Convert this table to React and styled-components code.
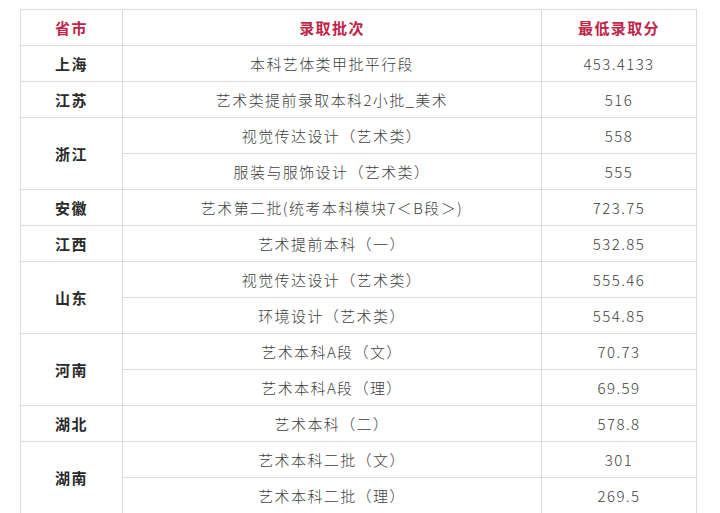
import React from "react";
import styled, { createGlobalStyle } from "styled-components";

const GlobalStyle = createGlobalStyle`
  html, body {
    margin: 0;
    padding: 0;
    background: #fff;
  }
  body {
    font-family: "Noto Sans CJK SC", "Noto Sans", sans-serif;
  }
`;

const Page = styled.div`
  padding: 9px 0 0 20px;
`;

const Table = styled.table`
  border-collapse: collapse;
  table-layout: fixed;
  width: 676px;
  font-size: 15px;
  letter-spacing: 1.4px;
  color: #444;
`;

const Cell = styled.td`
  height: 35px;
  padding: 0;
  border: 1px solid #dcdcdc;
  text-align: center;
  vertical-align: middle;
  line-height: 20px;
  font-weight: ${({ bold }) => (bold ? 700 : 300)};
  color: ${({ bold }) => (bold ? "#2a2a2a" : "#404040")};
`;

const Head = styled.th`
  height: 35px;
  padding: 0;
  border: 1px solid #dcdcdc;
  text-align: center;
  font-weight: 700;
  color: #c02448;
`;

const data = [
  { p: "上海", rows: [["本科艺体类甲批平行段", "453.4133"]] },
  { p: "江苏", rows: [["艺术类提前录取本科2小批_美术", "516"]] },
  {
    p: "浙江",
    rows: [
      ["视觉传达设计（艺术类）", "558"],
      ["服装与服饰设计（艺术类）", "555"],
    ],
  },
  { p: "安徽", rows: [["艺术第二批(统考本科模块7＜B段＞)", "723.75"]] },
  { p: "江西", rows: [["艺术提前本科（一）", "532.85"]] },
  {
    p: "山东",
    rows: [
      ["视觉传达设计（艺术类）", "555.46"],
      ["环境设计（艺术类）", "554.85"],
    ],
  },
  {
    p: "河南",
    rows: [
      ["艺术本科A段（文）", "70.73"],
      ["艺术本科A段（理）", "69.59"],
    ],
  },
  { p: "湖北", rows: [["艺术本科（二）", "578.8"]] },
  {
    p: "湖南",
    rows: [
      ["艺术本科二批（文）", "301"],
      ["艺术本科二批（理）", "269.5"],
    ],
  },
];

export default function App() {
  return (
    <Page>
      <GlobalStyle />
      <Table>
        <colgroup>
          <col style={{ width: 102 }} />
          <col style={{ width: 419 }} />
          <col style={{ width: 155 }} />
        </colgroup>
        <thead>
          <tr>
            <Head>省市</Head>
            <Head>录取批次</Head>
            <Head>最低录取分</Head>
          </tr>
        </thead>
        <tbody>
          {data.map((g) =>
            g.rows.map((r, i) => (
              <tr key={g.p + i}>
                {i === 0 && (
                  <Cell bold rowSpan={g.rows.length}>
                    {g.p}
                  </Cell>
                )}
                <Cell>{r[0]}</Cell>
                <Cell>{r[1]}</Cell>
              </tr>
            ))
          )}
        </tbody>
      </Table>
    </Page>
  );
}
